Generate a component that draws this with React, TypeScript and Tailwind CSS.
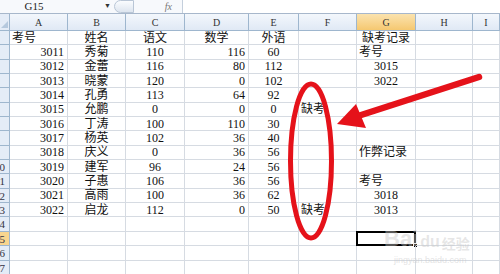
import React from 'react';

type Align = 'l' | 'c' | 'r';

const colDefaults: Align[] = ['r', 'c', 'c', 'r', 'c', 'l', 'c', 'l', 'l'];
const colLetters = ['A', 'B', 'C', 'D', 'E', 'F', 'G', 'H', 'I'];

// each cell: plain text or [text, align] override
type Cell = string | [string, Align];

const rows: Cell[][] = [
  [['考号', 'l'], '姓名', '语文', ['数学', 'c'], '外语', '', '缺考记录'],
  ['3011', '秀菊', '110', '116', '60', '', ['考号', 'l']],
  ['3012', '金蕾', '116', '80', '112', '', '3015'],
  ['3013', '晓蒙', '120', '0', '102', '', '3022'],
  ['3014', '孔勇', '113', '64', '92', '', ''],
  ['3015', '允鹏', '0', '0', '0', '缺考', ''],
  ['3016', '丁涛', '100', '110', '30', '', ''],
  ['3017', '杨英', '102', '36', '40', '', ''],
  ['3018', '庆义', '0', '36', '56', '', ['作弊记录', 'l']],
  ['3019', '建军', '96', '24', '56', '', ''],
  ['3020', '子惠', '106', '36', '56', '', ['考号', 'l']],
  ['3021', '高雨', '100', '36', '62', '', '3018'],
  ['3022', '启龙', '112', '0', '50', '缺考', '3013'],
  [], [], [], [],
];

const gridCols = 'grid grid-cols-[10px_58px_58px_59px_64px_50px_58px_59px_57px_1fr]';

const alignClass = (a: Align) =>
  a === 'l' ? 'justify-start pl-[2px]' : a === 'r' ? 'justify-end pr-[3px]' : 'justify-center';

const RowHeader = ({ n }: { n: number }) => (
  <div
    className={
      'relative h-[14.35px] overflow-hidden border-b border-r border-[#9eb6ce] ' +
      (n === 15 ? 'bg-[#f8d58e]' : 'bg-[#e4ecf7]')
    }
  >
    {n >= 10 && (
      <div className="absolute right-[4px] top-0 text-right text-[11px] leading-[14px] text-[#334]">{n}</div>
    )}
  </div>
);

export default function App() {
  return (
    <div
      className="relative w-[500px] h-[274px] overflow-hidden bg-white text-[#111]"
      style={{ fontFamily: '"Liberation Serif", "Noto Sans CJK SC", serif' }}
    >
      {/* formula bar */}
      <div className="flex items-center h-[14px] border-b border-[#a7b7cb] bg-[#f7f9fc]">
        <div className="w-[104px] h-full flex items-center justify-center pr-[36px] text-[11px] leading-none text-[#222]">
          G15
        </div>
        <span className="text-[7px] text-[#333]">▼</span>
        <div className="ml-[3px] w-[20px] h-[13px] rounded-l-full border border-[#b9c6d6] bg-gradient-to-b from-[#fafcfe] to-[#dde5ef]" />
        <div className="w-[48px] h-full flex items-center justify-end pr-[10px] text-[10px] italic text-[#777]">fx</div>
        <div className="flex-1 h-full bg-white border-l border-[#c4cfdc]" />
      </div>

      {/* column headers */}
      <div className={gridCols + ' h-[17px]'}>
        <div className="relative border-b border-r border-[#9eb6ce] bg-[#e4ecf7]">
          <div className="absolute right-[1px] bottom-[2px] w-0 h-0 border-l-[7px] border-l-transparent border-b-[7px] border-b-[#b6c9de]" />
        </div>
        {colLetters.map((c) => (
          <div
            key={c}
            className={
              'flex items-center justify-center border-b border-r border-[#9eb6ce] text-[10px] text-[#333] ' +
              (c === 'G' ? 'bg-gradient-to-b from-[#fbe3ae] to-[#f5c870]' : 'bg-gradient-to-b from-[#f3f7fc] to-[#e0e9f5]')
            }
          >
            {c}
          </div>
        ))}
      </div>

      {/* sheet rows */}
      {rows.map((r, i) => (
        <div key={i} className={gridCols}>
          <RowHeader n={i + 1} />
          {colLetters.map((_, j) => {
            const cell = r[j];
            const text = Array.isArray(cell) ? cell[0] : cell ?? '';
            const al = Array.isArray(cell) ? cell[1] : colDefaults[j];
            const selected = i + 1 === 15 && j === 6;
            return (
              <div
                key={j}
                className={
                  'relative flex items-center h-[14.35px] whitespace-nowrap border-b border-r border-[#d6dbe2] text-[12px] leading-none ' +
                  alignClass(al)
                }
              >
                {text}
                {selected && (
                  <>
                    <div className="absolute inset-[-1px] border-2 border-black" />
                    <div className="absolute right-[-3px] bottom-[-3px] w-[5px] h-[5px] bg-black border border-white" />
                  </>
                )}
              </div>
            );
          })}
        </div>
      ))}

      {/* baidu jingyan watermark */}
      <div className="absolute left-[384px] top-[228px] flex items-end text-[rgba(200,200,200,0.45)] pointer-events-none">
        <span className="text-[22px] font-bold leading-none" style={{ fontFamily: '"Liberation Sans", sans-serif' }}>Bai</span>
        <span className="text-[16px] font-bold leading-none ml-[2px]" style={{ fontFamily: '"Liberation Sans", sans-serif' }}>du</span>
        <span className="text-[14px] font-bold leading-none ml-[2px]" style={{ fontFamily: '"Noto Sans CJK SC", sans-serif' }}>经验</span>
      </div>
      <div
        className="absolute left-[394px] top-[254px] text-[9px] text-[rgba(200,200,200,0.5)] pointer-events-none"
        style={{ fontFamily: '"Liberation Sans", sans-serif' }}
      >
        jingyan.baidu.com
      </div>

      {/* red annotations */}
      <svg className="absolute inset-0 pointer-events-none" width="500" height="274" viewBox="0 0 500 274">
        <ellipse cx="311" cy="161" rx="20.5" ry="77" fill="none" stroke="#e5121a" strokeWidth="5" />
        <line x1="358" y1="116" x2="479" y2="77" stroke="#e5121a" strokeWidth="6.5" strokeLinecap="round" />
        <polygon points="337,124 356,104 366,128" fill="#e5121a" />
      </svg>
    </div>
  );
}
